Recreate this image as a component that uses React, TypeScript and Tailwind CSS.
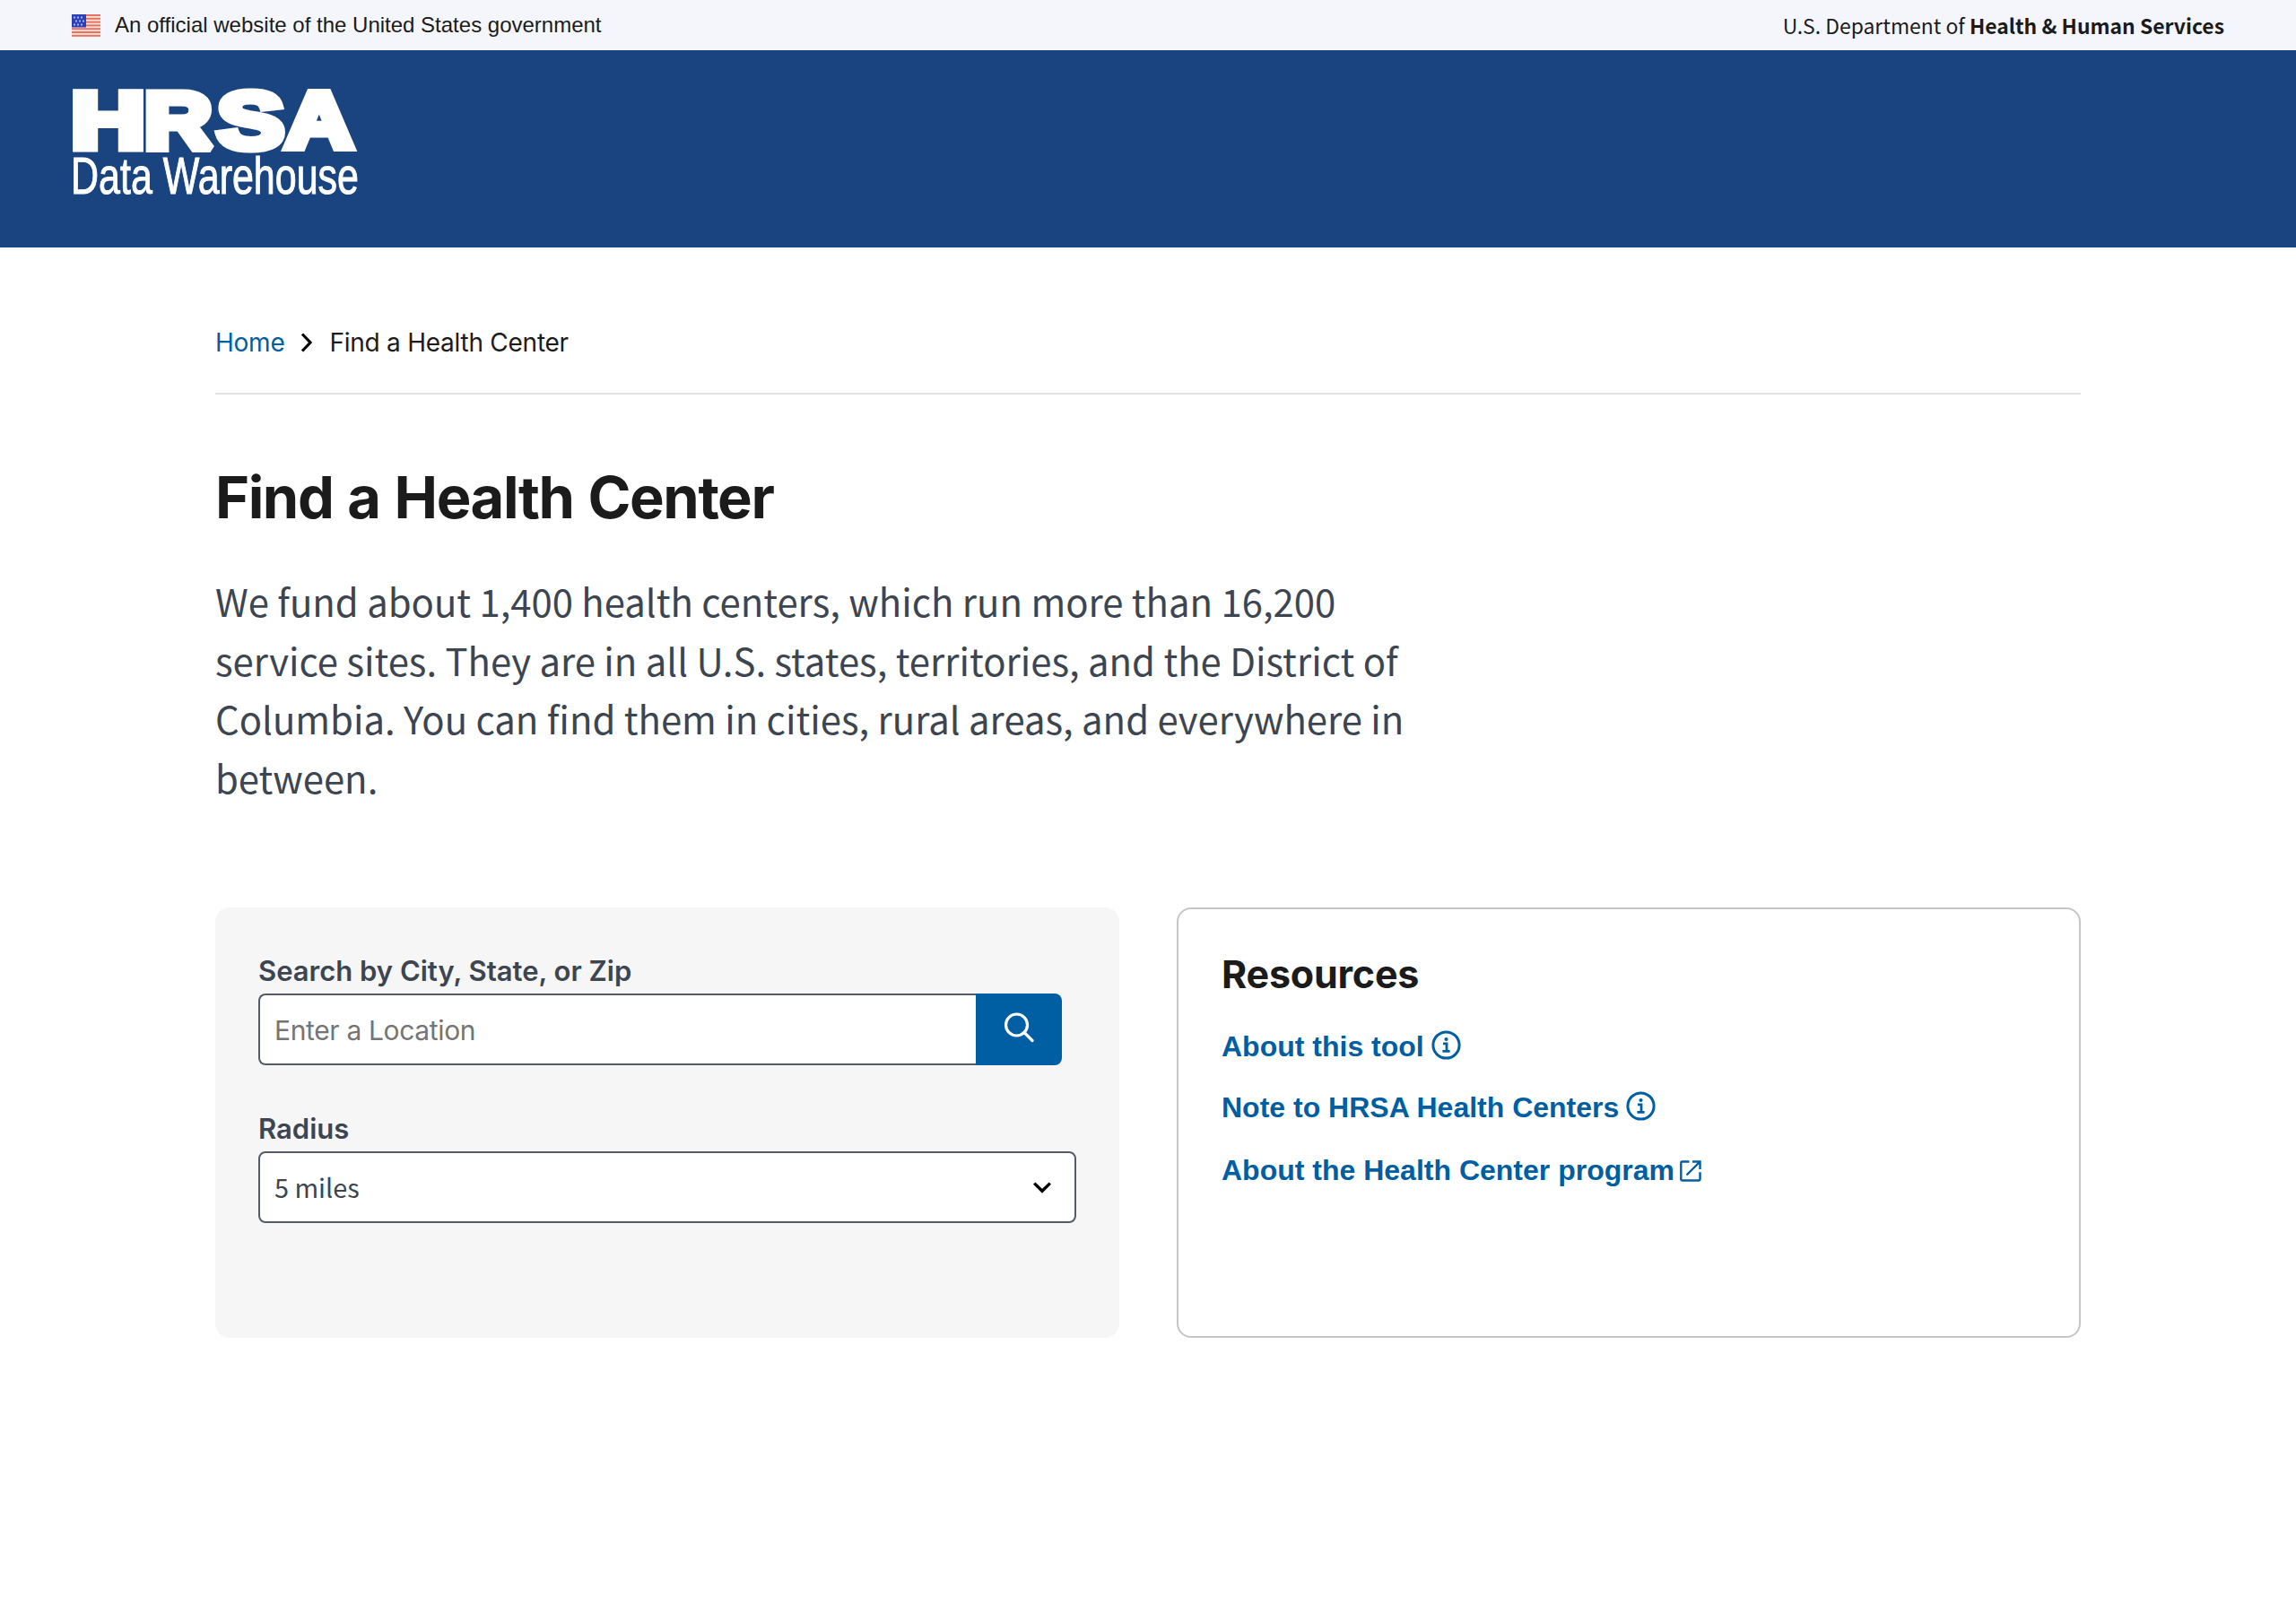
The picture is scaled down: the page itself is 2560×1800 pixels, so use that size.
import { useState } from "react";

const STRIPES = [0, 2, 4, 6, 8, 10, 12];
const RADIUS_OPTIONS = ["5 miles", "10 miles", "25 miles", "50 miles"];

function FlagIcon() {
  return (
    <svg width="32" height="32" viewBox="0 0 32 32" className="shrink-0">
      <rect width="32" height="25" y="4" fill="#fbe3dc" />
      {STRIPES.map((n) => (
        <rect key={n} x="0" y={4 + n * 1.9} width="32" height="2" fill="#e5735f" />
      ))}
      <rect x="0" y="4" width="16" height="14.5" fill="#2b3fb8" />
      {[6.5, 10.5, 14.5].map((y, row) =>
        [2, 6, 10].map((x) => (
          <rect key={`${x}-${y}`} x={x + (row === 1 ? 2 : 0)} y={y} width="2" height="2" fill="#a9b3e6" />
        ))
      )}
    </svg>
  );
}

function Logo() {
  return (
    <svg width="400" height="220" viewBox="0 0 400 220" role="img" aria-label="HRSA Data Warehouse">
      <g
        fill="#fff"
        stroke="#fff"
        strokeWidth="9"
        strokeMiterlimit="2"
        className="font-['Liberation_Sans',sans-serif] text-[88.6px] font-bold"
      >
        <text transform="translate(39.2 108.8) scale(1.29 1)">H</text>
        <text transform="translate(121 108.8) scale(1.18 1)">R</text>
        <text transform="translate(202.3 108.8) scale(1.26 1)">S</text>
        <text transform="translate(278 108.8) scale(1.18 1)">A</text>
      </g>
      <text
        x="39"
        y="160"
        textLength="321"
        lengthAdjust="spacingAndGlyphs"
        fill="#fff"
        stroke="#fff"
        strokeWidth="1"
        className="font-['Liberation_Sans',sans-serif] text-[58px]"
      >
        Data Warehouse
      </text>
    </svg>
  );
}

function InfoIcon() {
  return (
    <svg width="33" height="33" viewBox="0 0 33 33" fill="none" stroke="#005ea2" className="mb-[3px]">
      <circle cx="16.5" cy="16.5" r="14.6" strokeWidth="3" />
      <circle cx="16.5" cy="10" r="2.1" fill="#005ea2" stroke="none" />
      <path d="M13 14.9h4v8.4M12.4 23.4h8.2" strokeWidth="2.8" />
    </svg>
  );
}

function ExternalIcon() {
  return (
    <svg width="24" height="24" viewBox="0 0 24 24" fill="none" stroke="#005ea2" strokeWidth="2.4" className="mt-[2px]">
      <path d="M10.5 1.5H2.5Q1.3 1.5 1.3 2.7V21.3Q1.3 22.5 2.5 22.5H21.3Q22.5 22.5 22.5 21.3V13.2" />
      <path d="M14 1.5h8.5V10M22 2L7.5 16.5" />
    </svg>
  );
}

export default function App() {
  const [location, setLocation] = useState("");
  const [radius, setRadius] = useState(RADIUS_OPTIONS[0]);

  return (
    <div className="min-h-[1800px] bg-white font-['Inter',sans-serif] text-[#1b1b1b]">
      {/* Government banner */}
      <div className="flex h-14 items-center justify-between bg-[#f4f6fb] px-20">
        <div className="flex items-center gap-4">
          <FlagIcon />
          <span className="font-['Liberation_Sans',sans-serif] text-[24px] leading-8">
            An official website of the United States government
          </span>
        </div>
        <span className="font-['Noto_Sans_CJK_SC',sans-serif] text-[22.9px] leading-8">
          U.S. Department of <b className="font-bold">Health &amp; Human Services</b>
        </span>
      </div>

      <header className="h-[220px] bg-[#1a4480] px-10">
        <Logo />
      </header>

      <main className="mx-auto w-[2080px]">
        <nav className="flex h-[164px] items-center border-b-2 border-[#dfe1e2] pt-[50px] text-[28px] leading-9 tracking-[-0.25px]">
          <a href="#" className="text-[#005ea2]">Home</a>
          <svg width="14" height="22" viewBox="0 0 14 22" fill="none" className="mx-[18px]">
            <path d="M2 1.5L11 11L2 20.5" stroke="#000" strokeWidth="3.2" />
          </svg>
          <span>Find a Health Center</span>
        </nav>

        <h1 className="mt-[75px] text-[65px] leading-[80px] font-bold tracking-[-1.45px] [word-spacing:2px]">
          Find a Health Center
        </h1>

        <p className="mt-[42px] w-[1360px] font-['Noto_Sans_CJK_SC',sans-serif] text-[41.85px] leading-[65.5px] text-[#3d4551]">
          We fund about 1,400 health centers, which run more than 16,200
          <br />
          service sites. They are in all U.S. states, territories, and the District of
          <br />
          Columbia. You can find them in cities, rural areas, and everywhere in
          <br />
          between.
        </p>

        <div className="mt-[113px] grid grid-cols-2 gap-16">
          <section className="h-[480px] rounded-[16px] bg-[#f6f6f6] px-12 pt-[53px]">
            <label className="block text-[31px] leading-[36px] font-semibold text-[#3d4551]" htmlFor="location">
              Search by City, State, or Zip
            </label>
            <div className="mt-[7px] flex h-20 w-[896px]">
              <input
                id="location"
                value={location}
                onChange={(e) => setLocation(e.target.value)}
                placeholder="Enter a Location"
                className="w-[800px] rounded-l-[8px] border-2 border-r-0 border-[#565c65] bg-white px-4 pt-[3px] text-[30px] tracking-[-0.35px] outline-none placeholder:text-[#757575]"
              />
              <button className="flex w-24 items-center justify-center rounded-r-[8px] bg-[#005ea2] pb-1" aria-label="Search">
                <svg width="34" height="34" viewBox="0 0 34 34" fill="none" stroke="#fff" strokeWidth="3.2">
                  <circle cx="14.5" cy="14" r="12" />
                  <path d="M23 22.5L32 31.5" strokeLinecap="round" />
                </svg>
              </button>
            </div>

            <label className="mt-[53px] block text-[31px] leading-[36px] font-semibold text-[#3d4551]" htmlFor="radius">
              Radius
            </label>
            <div className="mt-[7px] flex h-20 items-center rounded-[8px] border-2 border-[#565c65] bg-white pr-[26px]">
              <select
                id="radius"
                value={radius}
                onChange={(e) => setRadius(e.target.value)}
                className="h-full flex-1 appearance-none bg-transparent pl-4 font-['Noto_Sans_CJK_SC',sans-serif] text-[28.8px] text-[#3d4551] outline-none"
              >
                {RADIUS_OPTIONS.map((o) => (
                  <option key={o}>{o}</option>
                ))}
              </select>
              <svg width="20" height="13" viewBox="0 0 20 13" fill="none">
                <path d="M1.2 1.6L10 10.3L18.8 1.6" stroke="#000" strokeWidth="3.4" />
              </svg>
            </div>
          </section>

          <section className="h-[480px] rounded-[16px] border-2 border-[#c6c6c6] px-12 pt-12">
            <h2 className="text-[43px] leading-[48px] font-bold tracking-[-0.2px]">Resources</h2>
            <ul className="mt-[33px] font-['Liberation_Sans',sans-serif] text-[32px] leading-[48px] font-bold text-[#005ea2]">
              <li className="flex items-center gap-2">
                <a href="#">About this tool</a>
                <InfoIcon />
              </li>
              <li className="mt-5 flex items-center gap-2">
                <a href="#">Note to HRSA Health Centers</a>
                <InfoIcon />
              </li>
              <li className="mt-[22px] flex items-center gap-[6px]">
                <a href="#">About the Health Center program</a>
                <ExternalIcon />
              </li>
            </ul>
          </section>
        </div>
      </main>
    </div>
  );
}
